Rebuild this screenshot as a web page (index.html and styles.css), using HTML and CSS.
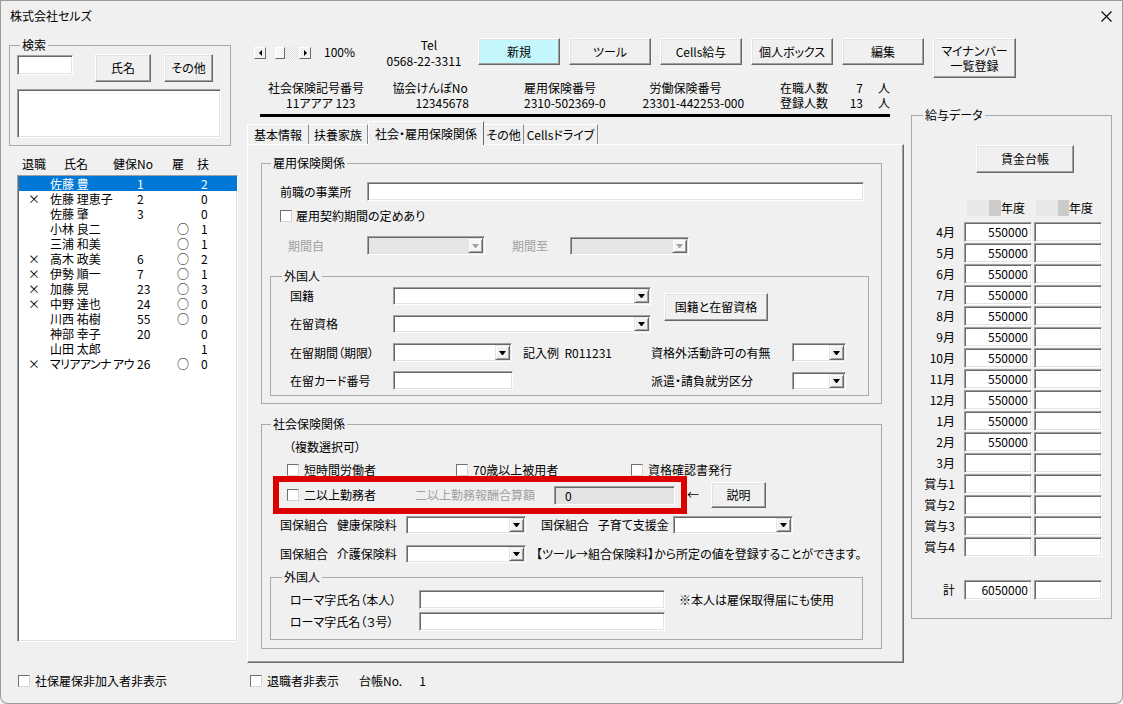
FILE: index.html
```html
<!DOCTYPE html>
<html lang="ja">
<head>
  <meta charset="UTF-8" />
  <title>株式会社セルズ</title>
  <link rel="stylesheet" href="styles.css">
</head>
<body>
<div class="window">
  <div class="titlebar">
    <span>株式会社セルズ</span>
    <svg width="11" height="11" viewBox="0 0 11 11"><path d="M0.5 0.5L10.5 10.5M10.5 0.5L0.5 10.5" stroke="#000" stroke-width="1.1" fill="none"/></svg>
  </div>

  <div class="client">
    <!-- 左: 検索と社員一覧 -->
    <div class="left">
      <fieldset class="grp search">
        <legend>検索</legend>
        <div class="search-row">
          <span class="field search-box"></span>
          <button class="btn btn-name">氏名</button>
          <button class="btn btn-other">その他</button>
        </div>
        <div class="field search-list"></div>
      </fieldset>

      <div class="list-head">
        <span class="lh-ret">退職</span><span class="lh-name">氏名</span><span class="lh-no">健保No</span><span class="lh-koyo">雇</span><span>扶</span>
      </div>
      <div class="field staff-list">
        <div class="staff on"><span class="s-ret"></span><span class="s-name">佐藤 豊</span><span class="s-no">1</span><span class="s-koyo"></span><span>2</span></div>
        <div class="staff"><span class="s-ret">×</span><span class="s-name">佐藤 理恵子</span><span class="s-no">2</span><span class="s-koyo"></span><span>0</span></div>
        <div class="staff"><span class="s-ret"></span><span class="s-name">佐藤 肇</span><span class="s-no">3</span><span class="s-koyo"></span><span>0</span></div>
        <div class="staff"><span class="s-ret"></span><span class="s-name">小林 良二</span><span class="s-no"></span><span class="s-koyo">○</span><span>1</span></div>
        <div class="staff"><span class="s-ret"></span><span class="s-name">三浦 和美</span><span class="s-no"></span><span class="s-koyo">○</span><span>1</span></div>
        <div class="staff"><span class="s-ret">×</span><span class="s-name">高木 政美</span><span class="s-no">6</span><span class="s-koyo">○</span><span>2</span></div>
        <div class="staff"><span class="s-ret">×</span><span class="s-name">伊勢 順一</span><span class="s-no">7</span><span class="s-koyo">○</span><span>1</span></div>
        <div class="staff"><span class="s-ret">×</span><span class="s-name">加藤 晃</span><span class="s-no">23</span><span class="s-koyo">○</span><span>3</span></div>
        <div class="staff"><span class="s-ret">×</span><span class="s-name">中野 達也</span><span class="s-no">24</span><span class="s-koyo">○</span><span>0</span></div>
        <div class="staff"><span class="s-ret"></span><span class="s-name">川西 祐樹</span><span class="s-no">55</span><span class="s-koyo">○</span><span>0</span></div>
        <div class="staff"><span class="s-ret"></span><span class="s-name">神部 幸子</span><span class="s-no">20</span><span class="s-koyo"></span><span>0</span></div>
        <div class="staff"><span class="s-ret"></span><span class="s-name">山田 太郎</span><span class="s-no"></span><span class="s-koyo"></span><span>1</span></div>
        <div class="staff"><span class="s-ret">×</span><span class="s-name narrow">マリアアンナ アウ</span><span class="s-no">26</span><span class="s-koyo">○</span><span>0</span></div>
      </div>

      <div class="row chk-left"><span class="cb"></span><span class="cb-text">社保雇保非加入者非表示</span></div>
    </div>

    <div class="rest">
      <div class="toolbar">
        <div class="sb">
          <span class="sb-btn"><i class="tri-l"></i></span>
          <span class="sb-track"><span class="sb-thumb"></span><span class="sb-dots"></span></span>
          <span class="sb-btn"><i class="tri-r"></i></span>
        </div>
        <span class="pct">100%</span>
        <div class="tel"><div class="tel-h">Tel</div><div>0568-22-3311</div></div>
        <button class="btn tb-btn new">新規</button>
        <button class="btn tb-btn">ツール</button>
        <button class="btn tb-btn">Cells給与</button>
        <button class="btn tb-btn">個人ボックス</button>
        <button class="btn tb-btn">編集</button>
        <button class="btn tb-btn mynum"><span class="mn-line">マイナンバー</span><span class="mn-line">一覧登録</span></button>
      </div>

      <div class="body-row">
        <div class="center">
          <div class="numbers">
            <div class="nc nc1"><div class="n-lbl">社会保険記号番号</div><div class="n-val">11アアア 123</div></div>
            <div class="nc nc2"><div class="n-lbl">協会けんぽNo</div><div class="n-val">12345678</div></div>
            <div class="nc nc3"><div class="n-lbl">雇用保険番号</div><div class="n-val">2310-502369-0</div></div>
            <div class="nc nc4"><div class="n-lbl">労働保険番号</div><div class="n-val">23301-442253-000</div></div>
            <div class="nc nc5">
              <div class="n-lbl cnt"><span>在職人数</span><span class="cnt-n">7</span><span class="cnt-u">人</span></div>
              <div class="n-val cnt"><span>登録人数</span><span class="cnt-n">13</span><span class="cnt-u">人</span></div>
            </div>
          </div>

          <div class="tabs">
            <span class="tab t1">基本情報</span>
            <span class="tab t2">扶養家族</span>
            <span class="tab t3 on">社会・雇用保険関係</span>
            <span class="tab t4">その他</span>
            <span class="tab t5">Cellsドライブ</span>
          </div>

          <div class="panel">
            <fieldset class="grp koyo">
              <legend>雇用保険関係</legend>
              <div class="row r-prev"><span class="lbl l-prev">前職の事業所</span><span class="field prev-in"></span></div>
              <div class="row r-term"><span class="cb"></span><span class="cb-text-s">雇用契約期間の定めあり</span></div>
              <div class="row r-period">
                <span class="lbl dim l-from">期間自</span><span class="field combo off w118"><i></i></span>
                <span class="lbl dim l-to">期間至</span><span class="field combo off w119"><i></i></span>
              </div>

              <fieldset class="grp gai1">
                <legend>外国人</legend>
                <div class="gai-top">
                  <div>
                    <div class="row"><span class="lbl l-g">国籍</span><span class="field combo w258"><i></i></span></div>
                    <div class="row r-gap"><span class="lbl l-g">在留資格</span><span class="field combo w258"><i></i></span></div>
                  </div>
                  <button class="btn btn-nat">国籍と在留資格</button>
                </div>
                <div class="row r-stay">
                  <span class="lbl l-g">在留期間（期限）</span><span class="field combo w119 h19"><i></i></span>
                  <span class="lbl l-ex">記入例&nbsp;&nbsp;R011231</span>
                  <span class="lbl l-r">資格外活動許可の有無</span><span class="field combo w54 h19"><i></i></span>
                </div>
                <div class="row r-card">
                  <span class="lbl l-g">在留カード番号</span><span class="field card-in"></span>
                  <span class="lbl l-r l-haken">派遣・請負就労区分</span><span class="field combo w54"><i></i></span>
                </div>
              </fieldset>
            </fieldset>

            <fieldset class="grp shakai">
              <legend>社会保険関係</legend>
              <div class="multi">（複数選択可）</div>
              <div class="row r-checks">
                <span class="ci ci1"><span class="cb"></span><span class="cb-text">短時間労働者</span></span>
                <span class="ci ci2"><span class="cb"></span><span class="cb-text">70歳以上被用者</span></span>
                <span class="ci"><span class="cb"></span><span class="cb-text">資格確認書発行</span></span>
              </div>
              <div class="row red-row">
                <div class="redbox">
                  <span class="ci ci-two"><span class="cb"></span><span class="cb-text">二以上勤務者</span></span>
                  <span class="lbl dim l-sum">二以上勤務報酬合算額</span>
                  <span class="field off sum-in">0</span>
                </div>
                <span class="arrow">←</span>
                <button class="btn btn-exp">説明</button>
              </div>
              <div class="row r-k1">
                <span class="lbl l-k">国保組合&ensp;&nbsp;健康保険料</span><span class="field combo w120"><i></i></span>
                <span class="lbl l-k2">国保組合&ensp;&nbsp;子育て支援金</span><span class="field combo w120"><i></i></span>
              </div>
              <div class="row r-k2">
                <span class="lbl l-k">国保組合&ensp;&nbsp;介護保険料</span><span class="field combo w120"><i></i></span>
                <span class="lbl k-note">【ツール→組合保険料】から所定の値を登録することができます。</span>
              </div>

              <fieldset class="grp gai2">
                <legend>外国人</legend>
                <div class="row r-r1"><span class="lbl l-roma">ローマ字氏名（本人）</span><span class="field roma-in"></span><span class="lbl r-note">※本人は雇保取得届にも使用</span></div>
                <div class="row r-r2"><span class="lbl l-roma">ローマ字氏名（３号）</span><span class="field roma-in h20"></span></div>
              </fieldset>
            </fieldset>
          </div>

          <div class="row bottom-line">
            <span class="cb"></span><span class="cb-text">退職者非表示</span>
            <span class="ledger-no">台帳No.</span><span class="ledger-val">1</span>
          </div>
        </div>

        <fieldset class="grp pay">
          <legend>給与データ</legend>
          <button class="btn btn-ledger">賃金台帳</button>
          <div class="years"><span class="mask"></span><span class="yr">年度</span><span class="mask m2"></span><span>年度</span></div>
          <div class="pay-grid">
            <span class="pm">4月</span><span class="field pv">550000</span><span class="field pv"></span>
            <span class="pm">5月</span><span class="field pv">550000</span><span class="field pv"></span>
            <span class="pm">6月</span><span class="field pv">550000</span><span class="field pv"></span>
            <span class="pm">7月</span><span class="field pv">550000</span><span class="field pv"></span>
            <span class="pm">8月</span><span class="field pv">550000</span><span class="field pv"></span>
            <span class="pm">9月</span><span class="field pv">550000</span><span class="field pv"></span>
            <span class="pm">10月</span><span class="field pv">550000</span><span class="field pv"></span>
            <span class="pm">11月</span><span class="field pv">550000</span><span class="field pv"></span>
            <span class="pm">12月</span><span class="field pv">550000</span><span class="field pv"></span>
            <span class="pm">1月</span><span class="field pv">550000</span><span class="field pv"></span>
            <span class="pm">2月</span><span class="field pv">550000</span><span class="field pv"></span>
            <span class="pm">3月</span><span class="field pv"></span><span class="field pv"></span>
            <span class="pm">賞与1</span><span class="field pv"></span><span class="field pv"></span>
            <span class="pm">賞与2</span><span class="field pv"></span><span class="field pv"></span>
            <span class="pm">賞与3</span><span class="field pv"></span><span class="field pv"></span>
            <span class="pm">賞与4</span><span class="field pv"></span><span class="field pv"></span>
          </div>
          <div class="pay-grid total">
            <span class="pm">計</span><span class="field pv">6050000</span><span class="field pv"></span>
          </div>
        </fieldset>
      </div>
    </div>
  </div>
</div>
</body>
</html>
```

FILE: styles.css
```css
* { box-sizing: border-box; }
body {
  margin: 0;
  background: #f0f0f0;
  font-family: "Noto Sans CJK JP", "Noto Sans", sans-serif;
  font-size: 12px;
  line-height: 14px;
  color: #000;
  font-feature-settings: "palt";
}
.window {
  width: 1123px;
  height: 704px;
  background: #f0f0f0;
  border-radius: 0 0 8px 8px;
  box-shadow: inset 0 0 0 1px #9c9c9c;
  overflow: hidden;
}
.titlebar {
  height: 32px;
  display: flex;
  align-items: center;
  justify-content: space-between;
  padding: 0 11px 0 10px;
}
.client { display: flex; height: 672px; }

/* controls */
.field {
  flex: none;
  background: #fff;
  border: 1px solid;
  border-color: #a0a0a0 #fff #fff #a0a0a0;
  box-shadow: inset 1px 1px 0 #696969, inset -1px -1px 0 #e3e3e3;
}
.field.off { background: #e3e3e3; }
.combo { display: flex; justify-content: flex-end; padding: 1px; height: 18px; }
.combo i {
  width: 15px;
  display: flex;
  align-items: center;
  justify-content: center;
  background: #f0f0f0;
  border: 1px solid;
  border-color: #e3e3e3 #696969 #696969 #e3e3e3;
  box-shadow: inset 1px 1px 0 #fff, inset -1px -1px 0 #a0a0a0;
}
.combo i::after {
  content: "";
  width: 1px;
  height: 0;
  border-left: 3px solid transparent;
  border-right: 3px solid transparent;
  border-top: 4px solid #000;
}
.combo.off { background: #e6e6e6; }
.combo.off i { background: #f6f6f6; }
.combo.off i::after { border-top-color: #a3a3a3; }
.h19 { height: 19px; }
.h20 { height: 20px; }
.w54 { width: 54px; }
.w118 { width: 118px; height: 19px; }
.w119 { width: 119px; }
.w120 { width: 120px; }
.w258 { width: 258px; }

.btn {
  flex: none;
  font: inherit;
  color: #000;
  padding: 0;
  background: #f0f0f0;
  border: 1px solid;
  border-color: #fff #696969 #696969 #fff;
  box-shadow: inset -1px -1px 0 #a0a0a0, inset 1px 1px 0 #e3e3e3;
}
.cb {
  flex: none;
  width: 12px;
  height: 12px;
  background: #fff;
  border: 1px solid;
  border-color: #707070 #d4d4d4 #d4d4d4 #707070;
}
.cb-text { margin-left: 5px; white-space: nowrap; }
.cb-text-s { margin-left: 4px; white-space: nowrap; }
.row { display: flex; align-items: center; }
.lbl { flex: none; white-space: nowrap; }
.dim { color: #a0a0a0; }

.grp {
  flex: none;
  margin: 0;
  padding: 0;
  min-width: 0;
  border: 1px solid #a9a9a9;
}
.grp legend { padding: 0 2px; line-height: 14px; }

/* left column */
.left { width: 247px; flex: none; padding: 6px 0 0 9px; }
.search { width: 222px; height: 108px; }
.search legend { margin-left: 10px; }
.search-row { display: flex; align-items: flex-start; margin: 2px 0 0 7px; }
.search-box { width: 56px; height: 20px; margin-top: 1px; }
.btn-name { width: 56px; height: 28px; margin-left: 22px; }
.btn-other { width: 49px; height: 28px; margin-left: 13px; }
.search-list { width: 204px; height: 49px; margin: 7px 0 0 7px; }

.list-head { display: flex; margin: 11px 0 0 13px; }
.lh-ret { width: 42px; }
.lh-name { width: 49px; }
.lh-no { width: 59px; }
.lh-koyo { width: 25px; }

.staff-list { width: 221px; height: 467px; margin: 4px 0 0 8px; padding-left: 1px; }
.staff { display: flex; height: 15px; line-height: 15px; white-space: nowrap; }
.staff.on { background: #0078d7; color: #fff; }
.s-ret { width: 30px; text-align: center; }
.s-name { width: 87px; padding-left: 1px; }
.s-name.narrow { letter-spacing: -0.6px; }
.s-no { width: 40px; margin-left: 1px; }
.s-koyo { width: 24px; }
.chk-left { margin: 32px 0 0 9px; }

/* toolbar */
.rest { flex: 1; display: flex; flex-direction: column; }
.toolbar { display: flex; align-items: flex-start; height: 41px; margin-top: 5px; }
.sb { display: flex; height: 12px; margin: 10px 0 0 7px; }
.sb-btn, .sb-thumb {
  width: 12px;
  height: 12px;
  display: flex;
  align-items: center;
  justify-content: center;
  background: #f0f0f0;
  border: 1px solid;
  border-color: #fff #696969 #696969 #fff;
}
.sb-thumb { width: 10px; background: #f7f7f7; }
.tri-l, .tri-r { width: 0; height: 0; border-top: 3px solid transparent; border-bottom: 3px solid transparent; }
.tri-l { border-right: 3px solid #000; }
.tri-r { border-left: 3px solid #000; }
.sb-track { display: flex; width: 33px; padding-left: 9px; }
.sb-dots { flex: 1; background: repeating-conic-gradient(#fff 0 25%, #d8d8d8 0 50%) 0 0 / 2px 2px; }
.pct { width: 32px; margin: 8px 0 0 13px; }
.tel { width: 80px; margin-left: 28px; text-align: center; line-height: 16px; }
.tel-h { padding-left: 10px; }
.tb-btn { width: 82px; height: 27px; margin: 1px 0 0 9px; }
.new { margin-left: 14px; background: #c4f7fc; }
.mynum { width: 83px; height: 40px; display: flex; flex-direction: column; align-items: center; justify-content: center; }
.mn-line { display: block; line-height: 15px; }

/* center */
.body-row { display: flex; }
.center { width: 657px; flex: none; }
.numbers {
  display: flex;
  width: 630px;
  margin: 3px 0 0 13px;
  padding-bottom: 3px;
  border-bottom: 3px solid #000;
  white-space: nowrap;
}
.n-lbl { line-height: 14px; }
.n-val { line-height: 16px; }
.nc1 { width: 125px; }
.nc1 .n-lbl { padding-left: 8px; }
.nc1 .n-val { padding-left: 26px; }
.nc2 { width: 130px; }
.nc2 .n-lbl { padding-left: 9px; }
.nc2 .n-val { padding-left: 32px; }
.nc3 { width: 125px; }
.nc3 .n-lbl, .nc3 .n-val { padding-left: 12px; }
.nc4 { width: 135px; }
.nc4 .n-lbl { padding-left: 14px; }
.nc4 .n-val { padding-left: 7px; }
.nc5 { padding-left: 11px; }
.cnt { display: flex; }
.cnt-n { width: 35px; text-align: right; }
.cnt-u { margin-left: 15px; }

.tabs { display: flex; align-items: flex-end; height: 23px; margin-top: 4px; position: relative; z-index: 1; }
.tab {
  height: 20px;
  display: flex;
  align-items: center;
  justify-content: center;
  white-space: nowrap;
  border-top: 1px solid #fff;
  border-right: 1px solid #8a8a8a;
}
.t1 { width: 62px; border-left: 1px solid #fff; }
.t2 { width: 59px; }
.t3 { width: 116px; }
.t4 { width: 40px; }
.t5 { width: 74px; }
.tab.on {
  height: 24px;
  margin-bottom: -1px;
  background: #f0f0f0;
  border-left: 1px solid #fff;
  border-right-color: #696969;
}

.panel {
  width: 657px;
  height: 519px;
  border: 1px solid;
  border-color: #fff #696969 #696969 #fff;
  box-shadow: inset -1px -1px 0 #a0a0a0;
}
.koyo { width: 621px; height: 248px; margin: 11px 0 0 13px; }
.koyo legend, .shakai legend { margin-left: 9px; }
.r-prev { margin-top: 12px; }
.l-prev { width: 105px; padding-left: 18px; }
.prev-in { width: 497px; height: 19px; }
.r-term { margin-top: 8px; padding-left: 18px; }
.r-period { margin-top: 13px; }
.l-from { width: 105px; padding-left: 26px; }
.l-to { width: 58px; margin-left: 27px; }

.gai1 { width: 599px; height: 127px; margin: 14px 0 0 8px; }
.gai1 legend, .gai2 legend { margin-left: 11px; }
.gai-top { display: flex; margin-top: 4px; }
.l-g { width: 122px; padding-left: 19px; }
.r-gap { margin-top: 10px; }
.btn-nat { width: 104px; height: 28px; margin: 6px 0 0 13px; }
.r-stay { margin-top: 10px; }
.l-ex { width: 128px; margin-left: 11px; }
.l-r { width: 141px; }
.r-card { margin-top: 9px; }
.card-in { width: 120px; height: 19px; }
.l-haken { margin-left: 138px; }

.shakai { width: 621px; height: 232px; margin: 13px 0 0 13px; }
.multi { margin-top: 9px; padding-left: 27px; }
.r-checks { margin-top: 9px; padding-left: 25px; line-height: 13px; }
.ci { display: flex; align-items: center; flex: none; }
.ci1 { width: 169px; }
.ci2 { width: 175px; }
.red-row { margin-left: 11px; }
.redbox {
  display: flex;
  align-items: center;
  width: 414px;
  height: 38px;
  padding-left: 8px;
  border: 6px solid #dc0000;
}
.ci-two { width: 128px; }
.l-sum { width: 139px; }
.sum-in { width: 121px; height: 19px; padding-left: 10px; line-height: 17px; }
.arrow { width: 12px; }
.btn-exp { width: 55px; height: 26px; margin-left: 12px; }
.r-k1 { margin-top: 2px; }
.r-k2 { margin-top: 11px; }
.l-k { width: 144px; padding-left: 18px; }
.l-k2 { width: 132px; margin-left: 15px; }
.k-note { margin-left: 10px; }

.gai2 { width: 593px; height: 70px; margin: 7px 0 0 8px; }
.r-r1 { margin-top: 6px; }
.r-r2 { margin-top: 3px; }
.l-roma { width: 148px; padding-left: 19px; }
.roma-in { width: 246px; height: 19px; }
.r-note { margin-left: 14px; }

.bottom-line { margin: 11px 0 0 3px; }
.ledger-no { margin-left: 20px; }
.ledger-val { margin-left: 17px; }

/* 給与データ */
.pay { width: 201px; height: 511px; margin: 30px 0 0 7px; }
.pay legend { margin-left: 11px; }
.btn-ledger { display: block; width: 98px; height: 28px; margin: 23px 0 0 64px; }
.years { display: flex; height: 16px; line-height: 16px; margin: 27px 0 0 55px; }
.mask { width: 34px; background: linear-gradient(to right, #e8e8e8 0 22px, #cbcbcb 22px); }
.mask.m2 { width: 33px; }
.yr { width: 35px; }
.pay-grid {
  display: grid;
  grid-template-columns: 50px 68px 68px;
  grid-auto-rows: 20px;
  column-gap: 2px;
  row-gap: 1px;
  margin-top: 6px;
}
.pm { text-align: right; padding-right: 7px; line-height: 20px; white-space: nowrap; }
.pv { text-align: right; padding-right: 3px; line-height: 18px; }
.pay-grid.total { margin-top: 23px; }
```
